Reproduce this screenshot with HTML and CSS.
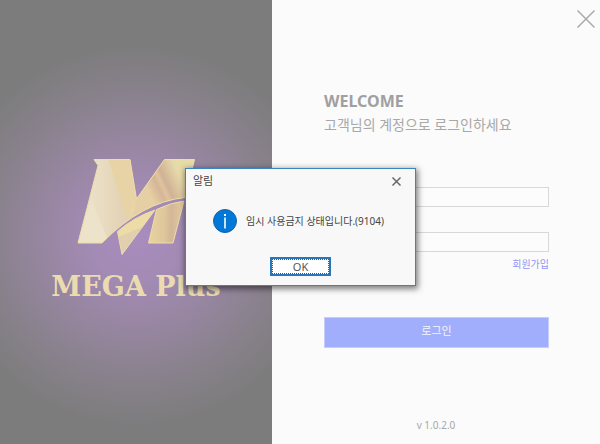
FILE: index.html
```html
<!DOCTYPE html>
<html lang="ko">
<head>
<meta charset="utf-8">
<title>MEGA Plus</title>
<link rel="stylesheet" href="styles.css">
</head>
<body>
<main class="window">
  <section class="brand">
    <svg class="emblem" viewBox="78 158 118 98" aria-hidden="true">
      <defs>
        <linearGradient id="gold" x1="0" y1="0" x2="1" y2="0">
          <stop offset="0" stop-color="#eee7d0"/>
          <stop offset=".4" stop-color="#e3d2b4"/>
          <stop offset=".52" stop-color="#ead7a6"/>
          <stop offset="1" stop-color="#e8d6a8"/>
        </linearGradient>
        <linearGradient id="sheen" gradientUnits="userSpaceOnUse" x1="148" y1="188" x2="180" y2="173">
          <stop offset="0" stop-color="#e6cfa4"/>
          <stop offset=".3" stop-color="#d4b698"/>
          <stop offset=".42" stop-color="#dfc49c"/>
          <stop offset=".55" stop-color="#d0b296"/>
          <stop offset="1" stop-color="#e7dbaa"/>
        </linearGradient>
        <linearGradient id="leg" x1="0" y1="0" x2="1" y2="0">
          <stop offset="0" stop-color="#e8d29f"/>
          <stop offset=".45" stop-color="#dfc69c"/>
          <stop offset=".65" stop-color="#d4b698"/>
          <stop offset="1" stop-color="#e6d09f"/>
        </linearGradient>
        <clipPath id="upper">
          <path d="M95 159.500H131L137.500 199L165.500 159.500H195.500L186 197.500Q143 202 103 243H79L99 165.500Z"/>
        </clipPath>
      </defs>
      <g clip-path="url(#upper)">
        <path fill="url(#gold)" d="M78 158H196V245H78Z"/>
        <path fill="#e7d3a5" d="M109 158H132L138 199L128 219Z"/>
        <path fill="#ece3ca" d="M93 201L110 243H76Z"/>
        <path fill="url(#sheen)" d="M166 158H197V199Q167 200 134 217L137 199Z"/>
      </g>
      <g fill="none" stroke="#eddda8">
        <path d="M95 159.500H131L137.500 199L165.500 159.500H195.500L186 197.500Q143 202 103 243H79L99 165.500Z"/>
        <path fill="#eddca6" d="M156 210L123 254.500L118.500 231.500Q135 217 156 210Z"/>
        <path fill="url(#leg)" d="M157.500 209.500Q171 203 185 201L174 243H149.500Z"/>
      </g>
      <path fill="#e2cfb0" d="M119.500 237L144 226.500L123.500 253Z"/>
    </svg>
    <p class="wordmark">MEGA Plus</p>
  </section>

  <section class="login">
    <button class="close" type="button" aria-label="닫기">
      <svg viewBox="0 0 18 18" aria-hidden="true"><path d="M0.500 0.500L17.500 17.500M17.500 0.500L0.500 17.500"/></svg>
    </button>
    <form class="form">
      <h1 class="welcome">WELCOME</h1>
      <p class="lead">고객님의 계정으로 로그인하세요</p>
      <input class="field" type="text" aria-label="아이디">
      <input class="field" type="password" aria-label="비밀번호">
      <a class="join" href="#">회원가입</a>
      <button class="submit" type="submit">로그인</button>
    </form>
    <p class="version">v 1.0.2.0</p>
  </section>
</main>

<div class="overlay">
  <div class="dialog" role="alertdialog" aria-labelledby="dialog-title" aria-describedby="dialog-text">
    <header class="dialog-bar">
      <h2 class="dialog-title" id="dialog-title">알림</h2>
      <button class="dialog-close" type="button" aria-label="닫기">
        <svg viewBox="0 0 9 9" aria-hidden="true"><path d="M0.500 0.500L8.500 8.500M8.500 0.500L0.500 8.500"/></svg>
      </button>
    </header>
    <div class="dialog-body">
      <svg class="info" viewBox="0 0 24 24" aria-hidden="true">
        <circle cx="12" cy="12" r="11.500" fill="#0078d7" stroke="#1a63a8"/>
        <path fill="#fff" d="M11 5h2v2h-2zM11.200 8.500h1.600v11h-1.600z"/>
      </svg>
      <p class="message" id="dialog-text">임시 사용금지 상태입니다.(9104)</p>
    </div>
    <button class="ok" type="button"><span class="ok-label">OK</span></button>
  </div>
</div>
</body>
</html>
```

FILE: styles.css
```css
* {
  box-sizing: border-box;
}

body {
  margin: 0;
  background: #fbfbfb;
  font-family: "Noto Sans", "Noto Sans CJK KR", sans-serif;
}

h1,
h2,
p {
  margin: 0;
  font-weight: 400;
}

button {
  padding: 0;
  border: 0;
  background: none;
  font-family: inherit;
}

svg {
  display: block;
}

.window {
  display: grid;
  grid-template-columns: 272fr 328fr;
  min-height: 100vh;
}

.brand {
  display: flex;
  flex-direction: column;
  align-items: center;
  padding-top: 158px;
  background: radial-gradient(circle at 50% 53%, #a98cbe 0, #a38bb5 45px, #9886a2 90px, #8a828e 138px, #7c7c7c 192px);
}

.emblem {
  width: 118px;
  height: 98px;
}

.wordmark {
  margin-top: 17px;
  color: #ebdbb0;
  font-family: "DejaVu Serif", serif;
  font-size: 27px;
  font-weight: 700;
  line-height: 28px;
  white-space: nowrap;
}

.login {
  display: flex;
  flex-direction: column;
}

.close {
  align-self: flex-end;
  width: 18px;
  height: 18px;
  margin: 10px 5px 0 0;
}

.close svg,
.dialog-close svg {
  width: 100%;
  overflow: visible;
  fill: none;
  stroke: #aaa;
  stroke-width: 1.5;
}

.form {
  display: flex;
  flex-direction: column;
  padding: 61px 51px 0 52px;
}

.welcome {
  color: #a0a0a0;
  font-size: 16px;
  font-weight: 700;
  line-height: 24px;
}

.lead {
  margin-bottom: 50px;
  color: #a8a8a8;
  font-size: 14px;
  line-height: 24px;
}

.field {
  width: 100%;
  height: 20px;
  margin-bottom: 25px;
  border: 1px solid #d8d8d8;
  background: #fcfcfc;
}

.join {
  align-self: flex-end;
  margin: -21px 0 45px;
  color: #9494f5;
  font-size: 10px;
  line-height: 16px;
  text-decoration: none;
}

.submit {
  height: 31px;
  border: 1px solid #c6cdfc;
  background: #a1aefb;
  color: #f4f5ff;
  font-size: 11px;
  line-height: 16px;
  padding-bottom: 4px;
}

.version {
  margin: auto 0 11px;
  color: #a8a8a8;
  font-size: 10px;
  line-height: 16px;
  text-align: center;
}

.overlay {
  position: absolute;
  inset: 10px 0 0 1px;
  display: flex;
  align-items: center;
  justify-content: center;
}

.dialog {
  display: flex;
  flex-direction: column;
  align-items: center;
  width: 231px;
  padding-bottom: 9px;
  border: 1px solid #3c84bf;
  background: #f8f8f8;
  box-shadow: 1px 2px 6px 1px rgba(0, 0, 0, 0.5);
  color: #444;
}

.dialog-bar {
  display: flex;
  align-items: center;
  justify-content: space-between;
  width: 100%;
  height: 24px;
  padding: 0 14px 0 7px;
}

.dialog-title {
  font-size: 11px;
  line-height: 16px;
}

.dialog-close {
  width: 9px;
  height: 9px;
}

.dialog-close svg {
  stroke: #666;
}

.dialog-body {
  display: flex;
  align-items: center;
  gap: 9px;
  width: 100%;
  padding: 16px 0 24px 27px;
}

.info {
  flex: none;
  width: 24px;
  height: 24px;
}

.message {
  font-size: 10px;
  line-height: 16px;
  white-space: nowrap;
}

.ok {
  width: 61px;
  height: 19px;
  border: 2px solid #2578bd;
  background: #fff;
  color: #555;
  font-size: 11px;
}

.ok-label {
  display: block;
  height: 15px;
  border: 1px dotted #555;
  line-height: 13px;
}
```
